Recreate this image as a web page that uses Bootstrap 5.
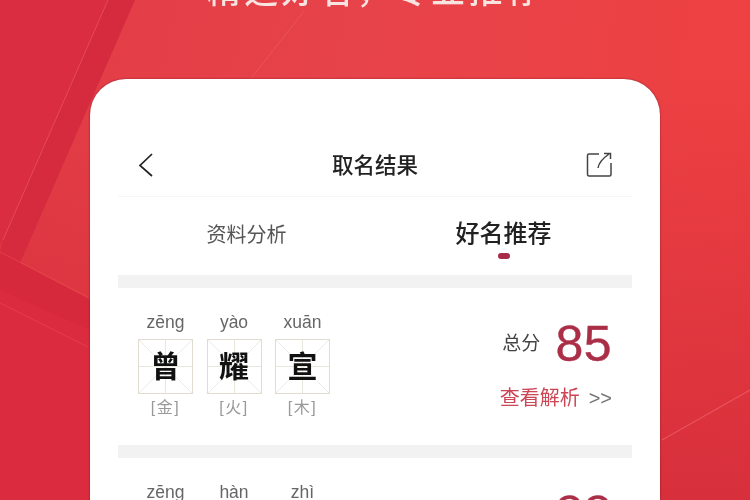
<!doctype html>
<html lang="zh">
<head>
<meta charset="utf-8">
<title>取名结果</title>
<link href="https://cdn.jsdelivr.net/npm/bootstrap@5.3.0/dist/css/bootstrap.min.css" rel="stylesheet">
<style>
html,body{margin:0;background:#e5363f;overflow:hidden}
body{font-family:"Liberation Sans","Noto Sans CJK SC",sans-serif}
.stage{position:relative;width:750px;height:500px;overflow:hidden;background:linear-gradient(180deg,rgba(238,64,64,0) 15%,#d72f3c 100%),linear-gradient(100deg,#e23c46 0%,#e7434a 45%,#ef4040 100%)}
.backdrop{position:absolute;inset:0;width:750px;height:500px}
.stack{position:relative;filter:blur(.45px)}
.slogan{margin-top:-34px;height:46px;line-height:46px;font-size:34px;font-weight:500;letter-spacing:3.4px;color:#f7e3df;text-align:center;font-family:"Noto Sans CJK SC",sans-serif}
.sheet{width:570px;height:520px;margin:67px 0 0 90px;padding:0 28px;background:#fff;border-radius:36px 36px 0 0;box-shadow:0 0 2px rgba(110,20,35,.85);font-family:"Liberation Sans","Noto Sans CJK SC",sans-serif}
.topbar{height:118px;padding:57px 20px 0;border-bottom:1px solid #f6f6f6}
.topbar-name{font-size:21.5px;color:#222;font-weight:500;line-height:60px}
.top-slot{width:26px;height:60px}
.top-slot svg{display:block}
.tabrow{height:78px;margin:0}
.tab-off{font-size:20px;color:#555;line-height:1;padding-top:28px}
.tab-on{font-size:24px;color:#222;font-weight:500;line-height:1;padding-top:25px}
.tab-dot{width:12px;height:6px;border-radius:3px;background:#a62c48;margin:7px auto 0}
.band{height:13px;background:#f2f2f2}
.entry{height:157px;padding:0 20px}
.cells{gap:13.5px}
.cell{width:55px;text-align:center}
.pinyin{font-size:17.5px;color:#666;line-height:20px;margin-top:24px;margin-bottom:7px;height:20px;white-space:nowrap}
.grid-box{width:55px;height:55px;line-height:53px;font-size:30px;font-weight:700;color:#111;border:1px solid #e0ddd0;background:
linear-gradient(#e9e6dc,#e9e6dc) center/100% 1px no-repeat,
linear-gradient(#e9e6dc,#e9e6dc) center/1px 100% no-repeat,
linear-gradient(to top right,transparent calc(50% - .6px),#eeebe3,transparent calc(50% + .6px)),
linear-gradient(to bottom right,transparent calc(50% - .6px),#eeebe3,transparent calc(50% + .6px))}
.element{font-size:16px;color:#999;line-height:20px;margin-top:4px;letter-spacing:1.5px}
.score-side{padding-top:27px;text-align:right}
.score-label{font-size:19px;color:#444;margin-right:15px}
.score-num{font-size:50px;line-height:58px;color:#ab2e47;letter-spacing:.5px;-webkit-text-stroke:.4px #ab2e47}
.detail{font-size:20px;color:#cc4656;line-height:24px;margin-top:13px;white-space:nowrap}
.detail-arrow{color:#777;font-size:20px;margin-left:9px}
</style>
</head>
<body>
<div class="stage">
  <svg class="backdrop" viewBox="0 0 750 500" aria-hidden="true">
    <polygon points="0,0 108,0 3,240 0,245" fill="#da2d41"/>
    <polygon points="108,0 135,0 20,263 0,252 3,240" fill="#d62a3e"/>
    <polygon points="0,252 20,263 90,300 90,500 0,500" fill="#db2b3e"/>
    <polygon points="20,263 90,300 90,330 0,290 0,252" fill="#d7293c"/>
    <path d="M108 0 3 240M304 11 246 85" stroke="#f0606a" stroke-width="1" fill="none" opacity=".55"/>
    <path d="M0 303 88 347M0 252 88 297" stroke="#ee5660" stroke-width="1" fill="none" opacity=".45"/>
    <path d="M662 440 750 390" stroke="#f0606a" stroke-width="1.2" fill="none" opacity=".7"/>
  </svg>
  <div class="stack">
    <div class="slogan">精选好名，专业推荐</div>
    <div class="sheet">
      <div class="topbar d-flex justify-content-between align-items-start">
        <div class="top-slot pt-3">
          <svg width="16" height="26" viewBox="0 0 16 26" aria-hidden="true"><path d="M14 2 2 13.500 14 24" fill="none" stroke="#222" stroke-width="1.700"/></svg>
        </div>
        <div class="topbar-name">取名结果</div>
        <div class="top-slot pt-3">
          <svg width="26" height="25" viewBox="0 0 26 25" aria-hidden="true"><path d="M13 2H3Q1.500 2 1.500 3.500V22Q1.500 24 3 24H23.500Q25 24 25 22V11M12 16Q13 9 23 2M18 1.500H24.500V7" fill="none" stroke="#444" stroke-width="1.500"/></svg>
        </div>
      </div>
      <div class="row tabrow g-0 text-center">
        <div class="col-6"><div class="tab-off">资料分析</div></div>
        <div class="col-6"><div class="tab-on">好名推荐</div><div class="tab-dot"></div></div>
      </div>
      <div class="band"></div>
      <div class="entry d-flex justify-content-between">
        <div class="cells d-flex">
          <div class="cell"><div class="pinyin">zēng</div><div class="grid-box">曾</div><div class="element">[金]</div></div>
          <div class="cell"><div class="pinyin">yào</div><div class="grid-box">耀</div><div class="element">[火]</div></div>
          <div class="cell"><div class="pinyin">xuān</div><div class="grid-box">宣</div><div class="element">[木]</div></div>
        </div>
        <div class="score-side">
          <div class="d-flex align-items-center justify-content-end"><span class="score-label">总分</span><span class="score-num">85</span></div>
          <div class="detail">查看解析<span class="detail-arrow">&gt;&gt;</span></div>
        </div>
      </div>
      <div class="band"></div>
      <div class="entry d-flex justify-content-between">
        <div class="cells d-flex">
          <div class="cell"><div class="pinyin">zēng</div></div>
          <div class="cell"><div class="pinyin">hàn</div></div>
          <div class="cell"><div class="pinyin">zhì</div></div>
        </div>
        <div class="score-side">
          <div class="d-flex align-items-center justify-content-end"><span class="score-label">总分</span><span class="score-num">88</span></div>
        </div>
      </div>
    </div>
  </div>
</div>
<script src="https://cdn.jsdelivr.net/npm/bootstrap@5.3.0/dist/js/bootstrap.bundle.min.js"></script>
</body>
</html>
